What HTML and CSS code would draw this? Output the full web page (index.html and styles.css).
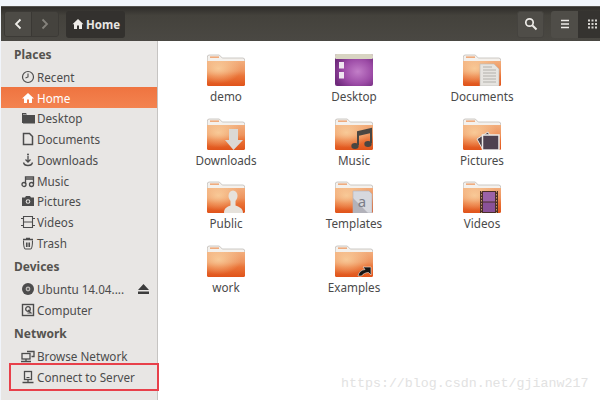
FILE: index.html
```html
<!DOCTYPE html>
<html lang="en">

<head>
    <meta charset="UTF-8">
    <title>Home</title>
    <link rel="stylesheet" href="styles.css">
</head>

<body>
    <!-- shared folder drawing -->
    <svg class="defs" width="0" height="0">
        <defs>
            <linearGradient id="folderFill" x1="0" y1="0" x2="0" y2="1">
                <stop offset="0" stop-color="#f2ad7c"/>
                <stop offset="0.4" stop-color="#ee945e"/>
                <stop offset="0.6" stop-color="#ea7438"/>
                <stop offset="1" stop-color="#e0531a"/>
            </linearGradient>
            <radialGradient id="folderGlow" cx="0.3" cy="0.3" r="0.6">
                <stop offset="0" stop-color="#fbd9a8" stop-opacity="0.75"/>
                <stop offset="1" stop-color="#fbd9a8" stop-opacity="0"/>
            </radialGradient>
            <radialGradient id="desktopFill" cx="0.6" cy="0.55" r="0.65">
                <stop offset="0" stop-color="#c27ec8"/>
                <stop offset="0.6" stop-color="#9c4ba6"/>
                <stop offset="1" stop-color="#6f2a7c"/>
            </radialGradient>
            <symbol id="folder" viewBox="0 0 38 32">
                <path d="M.3 3q0-2 2-2h10l3 3h20.400q2 0 2 2v6H.3z" fill="#f4f1ed" stroke="#b9b5b0" stroke-width=".7"/>
                <rect x="3" y="2.500" width="9" height="1.300" fill="#ee9a62"/>
                <path d="M0 7h38v23.500q0 1.500-1.500 1.500h-35Q0 32 0 30.500z" fill="url(#folderFill)"/>
                <path d="M0 7h38v23.500q0 1.500-1.500 1.500h-35Q0 32 0 30.500z" fill="url(#folderGlow)"/>
            </symbol>
        </defs>
    </svg>

    <div class="window">
        <header class="toolbar">
            <div class="nav-group">
                <button class="nav-btn">
                    <svg width="10" height="12" viewBox="0 0 10 12"><path d="M7.500 1.500 3 6l4.500 4.500" fill="none" stroke="#eeece8" stroke-width="1.800"/></svg>
                </button>
                <button class="nav-btn">
                    <svg width="10" height="12" viewBox="0 0 10 12"><path d="M2.500 1.500 7 6l-4.500 4.500" fill="none" stroke="#85827c" stroke-width="1.800"/></svg>
                </button>
            </div>
            <div class="path-btn">
                <svg width="12" height="12" viewBox="0 0 12 12"><path d="M6 1 .5 6.200H2V11h3V7.500h2V11h3V6.200h1.500z" fill="#eeece8"/></svg>
                <span>Home</span>
            </div>
            <div class="spacer"></div>
            <button class="tool-btn">
                <svg width="14" height="14" viewBox="0 0 14 14"><circle cx="5.500" cy="5.500" r="3.700" fill="none" stroke="#eeece8" stroke-width="1.700"/><path d="m8.500 8.500 4 4" stroke="#eeece8" stroke-width="2"/></svg>
            </button>
            <div class="view-group">
                <button class="view-btn">
                    <svg width="10" height="10" viewBox="0 0 10 10"><path d="M1 1.500h8M1 5h8M1 8.500h8" stroke="#eeece8" stroke-width="1.700"/></svg>
                </button>
                <button class="view-btn dark">
                    <svg width="10" height="10" viewBox="0 0 10 10"><path d="M0 1.500h10M0 5h10M0 8.500h10" stroke="#d8d6d2" stroke-width="1.800" stroke-dasharray="2 1.500"/></svg>
                </button>
            </div>
        </header>

        <div class="content">
            <nav class="sidebar">
                <h3 class="side-title">Places</h3>
                <div class="side-row">
                    <svg class="side-icon" viewBox="0 0 14 14"><circle cx="7" cy="7" r="5.500" fill="none" stroke="#4c4c4c" stroke-width="1.200"/><path d="M7 3.500V7l-2.500 1" fill="none" stroke="#4c4c4c" stroke-width="1.100"/></svg>
                    <span>Recent</span>
                </div>
                <div class="side-row active">
                    <svg class="side-icon" viewBox="0 0 14 14"><path d="M7 2 1 7.500h2V12h3V8.500h2V12h3V7.500h2z" fill="#fff"/></svg>
                    <span>Home</span>
                </div>
                <div class="side-row">
                    <svg class="side-icon" viewBox="0 0 14 14"><path d="M1 2h4l1 1.500h-4V12H1z" fill="#4c4c4c"/><rect x="2" y="4" width="12" height="8.500" fill="#4c4c4c"/></svg>
                    <span>Desktop</span>
                </div>
                <div class="side-row">
                    <svg class="side-icon" viewBox="0 0 14 14"><path d="M2.500 1.500h6l3 3v8h-9z" fill="none" stroke="#4c4c4c" stroke-width="1.500"/></svg>
                    <span>Documents</span>
                </div>
                <div class="side-row">
                    <svg class="side-icon" viewBox="0 0 14 14"><path d="M7 3v6M4.500 6.500 7 9l2.500-2.500M2.500 9.500C3 12 5 12.500 7 12.500s4-.5 4.500-3" fill="none" stroke="#4c4c4c" stroke-width="1.300"/><circle cx="7" cy="1.500" r="1" fill="#4c4c4c"/></svg>
                    <span>Downloads</span>
                </div>
                <div class="side-row">
                    <svg class="side-icon" viewBox="0 0 14 14"><path d="M4.500 10V3h8v7M4.500 5h8" fill="none" stroke="#4c4c4c" stroke-width="1.300"/><circle cx="3" cy="10.500" r="2" fill="none" stroke="#4c4c4c" stroke-width="1.300"/><circle cx="10.500" cy="10.500" r="2" fill="none" stroke="#4c4c4c" stroke-width="1.300"/></svg>
                    <span>Music</span>
                </div>
                <div class="side-row">
                    <svg class="side-icon" viewBox="0 0 14 14"><path d="M1 3.500h3L5 2h4l1 1.500h3V12H1z" fill="#4c4c4c"/><circle cx="7" cy="7.500" r="2.300" fill="#e8e6e4"/><circle cx="7" cy="7.500" r="1.200" fill="#4c4c4c"/></svg>
                    <span>Pictures</span>
                </div>
                <div class="side-row">
                    <svg class="side-icon" viewBox="0 0 14 14"><path d="M2.500 1v12M11.500 1v12M2.500 7h9M2.500 3.500H0M2.500 10.500H0M14 3.500h-2.500M14 10.500h-2.500M2.500 1.500h9M2.500 12.500h9" fill="none" stroke="#4c4c4c" stroke-width="1.100"/></svg>
                    <span>Videos</span>
                </div>
                <div class="side-row">
                    <svg class="side-icon" viewBox="0 0 14 14"><path d="M2 3.500h10M5 2.500h4" stroke="#4c4c4c" stroke-width="1.500"/><path d="M2.500 4.500c0 8 1 8.500 2 8.500h5c1 0 2-.5 2-8.500M5.500 6.500v4.500M7 6.500v4.500M8.500 6.500v4.500" fill="none" stroke="#4c4c4c" stroke-width="1.100"/></svg>
                    <span>Trash</span>
                </div>

                <h3 class="side-title">Devices</h3>
                <div class="side-row">
                    <svg class="side-icon" viewBox="0 0 14 14"><circle cx="7" cy="7" r="6" fill="#4c4c4c"/><circle cx="7" cy="7" r="2.400" fill="#b8b6b4"/><circle cx="7" cy="7" r="1" fill="#4c4c4c"/></svg>
                    <span class="grow">Ubuntu 14.04....</span>
                    <svg class="eject" width="11" height="10" viewBox="0 0 11 10"><path d="M5.500 0 11 6H0zM0 7.500h11V10H0z" fill="#3c3c3c"/></svg>
                </div>
                <div class="side-row">
                    <svg class="side-icon" viewBox="0 0 14 14"><rect x="1.500" y="1.500" width="11" height="11" fill="none" stroke="#4c4c4c" stroke-width="1.400"/><circle cx="7" cy="6" r="2.300" fill="none" stroke="#4c4c4c" stroke-width="1.300"/><path d="m7 7 3 3H6.500" fill="none" stroke="#4c4c4c" stroke-width="1.200"/></svg>
                    <span>Computer</span>
                </div>

                <h3 class="side-title">Network</h3>
                <div class="side-row">
                    <svg class="side-icon" viewBox="0 0 14 14"><rect x="1" y="4.500" width="8" height="5.500" fill="none" stroke="#4c4c4c" stroke-width="1.300"/><path d="M6 2.500h7v5h-2.500" fill="none" stroke="#4c4c4c" stroke-width="1.300"/><path d="M0 12.500h10M5 10v2.500" stroke="#4c4c4c" stroke-width="1.300"/></svg>
                    <span>Browse Network</span>
                </div>
                <div class="side-row">
                    <svg class="side-icon" viewBox="0 0 14 14"><rect x="3.500" y="1.500" width="7" height="8" fill="none" stroke="#4c4c4c" stroke-width="1.300"/><path d="M1.500 12.500h11M7 9.500v3" stroke="#4c4c4c" stroke-width="1.300"/><path d="M5.500 7.500h3" stroke="#4c4c4c"/></svg>
                    <span>Connect to Server</span>
                </div>
            </nav>

            <main class="files">
                <div class="file">
                    <svg class="file-icon" viewBox="0 0 38 32"><use href="#folder"/></svg>
                    <span>demo</span>
                </div>
                <div class="file">
                    <svg class="file-icon" viewBox="0 0 38 32">
                        <rect x="0" y="0" width="38" height="32" rx="2" fill="url(#desktopFill)"/>
                        <rect x="0" y="0" width="38" height="5" rx="1.500" fill="#d8d4c2"/>
                        <rect x="4" y="8" width="5" height="6.500" fill="#efe6f0"/>
                        <rect x="4" y="18" width="5" height="6.500" fill="#efe6f0"/>
                    </svg>
                    <span>Desktop</span>
                </div>
                <div class="file">
                    <svg class="file-icon" viewBox="0 0 38 32">
                        <use href="#folder"/>
                        <path d="M17 10h14l5 5v17H17z" fill="#e6e4e0" stroke="#bdbab6" stroke-width=".6"/>
                        <path d="M20 13h9M20 16h13M20 19h13M20 22h13M20 25h13M20 28h13" stroke="#a5a29e" stroke-width=".8"/>
                    </svg>
                    <span>Documents</span>
                </div>
                <div class="file">
                    <svg class="file-icon" viewBox="0 0 38 32">
                        <use href="#folder"/>
                        <path d="M22 11h9v11h5L26.500 32 18 22h4z" fill="#dbd8d4"/>
                    </svg>
                    <span>Downloads</span>
                </div>
                <div class="file">
                    <svg class="file-icon" viewBox="0 0 38 32">
                        <use href="#folder"/>
                        <path d="M23 27V14l13-3v14" fill="none" stroke="#4a4642" stroke-width="2"/>
                        <path d="M23 14l13-3v4l-13 3z" fill="#4a4642"/>
                        <ellipse cx="20" cy="28" rx="3.700" ry="3" fill="#4a4642"/>
                        <ellipse cx="33" cy="26" rx="3.700" ry="3" fill="#4a4642"/>
                    </svg>
                    <span>Music</span>
                </div>
                <div class="file">
                    <svg class="file-icon" viewBox="0 0 38 32">
                        <use href="#folder"/>
                        <path d="m14 21 11-7 6 11-11 7z" fill="#4a4048" stroke="#e6e2de"/>
                        <rect x="19.500" y="17" width="16.500" height="15" fill="#4e4250" stroke="#ecebe8" stroke-width="1.500"/>
                    </svg>
                    <span>Pictures</span>
                </div>
                <div class="file">
                    <svg class="file-icon" viewBox="0 0 38 32">
                        <use href="#folder"/>
                        <ellipse cx="26" cy="15" rx="4.500" ry="5.500" fill="#e6e2dc"/>
                        <path d="M17 32c0-5 3-6 6.500-7.500V19h5v5.500C32 26 36 27 36 32z" fill="#e6e2dc"/>
                    </svg>
                    <span>Public</span>
                </div>
                <div class="file">
                    <svg class="file-icon" viewBox="0 0 38 32">
                        <use href="#folder"/>
                        <path d="M18 10h16l3 3v19H18z" fill="#d6d8de" stroke="#b4b4b8" stroke-width=".6"/>
                        <path d="M18 17v15h15z" fill="#b2b2ba"/>
                        <text class="tpl-letter" x="27" y="26">a</text>
                    </svg>
                    <span>Templates</span>
                </div>
                <div class="file">
                    <svg class="file-icon" viewBox="0 0 38 32">
                        <use href="#folder"/>
                        <rect x="17" y="10" width="18" height="22" fill="#4a2f28"/>
                        <rect x="20" y="11" width="12" height="9.500" fill="#9a62a8"/>
                        <rect x="20" y="21.500" width="12" height="9.500" fill="#8a5298"/>
                        <path d="M18.500 10v22M33.500 10v22" stroke="#c49a6a" stroke-width="1" stroke-dasharray="1.500 1.500"/>
                    </svg>
                    <span>Videos</span>
                </div>
                <div class="file">
                    <svg class="file-icon" viewBox="0 0 38 32"><use href="#folder"/></svg>
                    <span>work</span>
                </div>
                <div class="file">
                    <svg class="file-icon" viewBox="0 0 38 32">
                        <use href="#folder"/>
                        <path d="M23 31c1-4 3-6 7-6.500L28 22h8v8l-2.500-2.500c-3 0-5.500 1.500-7 3.500z" fill="#141414" stroke="#f3efe8" stroke-width=".6"/>
                    </svg>
                    <span>Examples</span>
                </div>
            </main>
        </div>
    </div>

    <div class="highlight"></div>
    <div class="watermark">https://blog.csdn.net/gjianw217</div>
</body>

</html>
```

FILE: styles.css
```css
* {
    box-sizing: border-box;
}

html, body {
    margin: 0;
    height: 400px;
    overflow: hidden;
}

body {
    background-color: #f1f5fb;
    padding-top: 6px;
    font-family: "Noto Sans", sans-serif;
    font-size: 11.7px;
    position: relative;
}

.defs {
    position: absolute;
}

.window {
    height: 394px;
    margin-left: 1px;
    display: flex;
    flex-direction: column;
    background-color: #fff;
}

.toolbar {
    height: 35px;
    flex: none;
    display: flex;
    align-items: center;
    padding: 0 0 0 3px;
    background: linear-gradient(#2f2d2a, #44423c 25%, #4a4843);
    border-top: 1px solid #55534f;
}

button {
    border: none;
    padding: 0;
    background: none;
    display: flex;
    align-items: center;
    justify-content: center;
}

.nav-group {
    display: flex;
    width: 55px;
    height: 26px;
    border-radius: 3px;
    overflow: hidden;
    border: 1px solid #3c3a36;
}

.nav-btn {
    flex: 1;
    background-color: #4d4b46;
}

.nav-btn + .nav-btn {
    background-color: #45433e;
    border-left: 1px solid #3a3834;
}

.path-btn {
    margin-left: 7px;
    width: 59px;
    height: 27px;
    display: flex;
    align-items: center;
    gap: 2px;
    padding-left: 6px;
    border-radius: 3px;
    background-color: #33312e;
    color: #e8e6e2;
    font-weight: 700;
    font-size: 11.5px;
}

.spacer {
    flex: 1;
}

.tool-btn {
    width: 27px;
    height: 27px;
    border-radius: 3px;
    background-color: #4f4d48;
    border: 1px solid #45433f;
}

.view-group {
    display: flex;
    margin-left: 7px;
    height: 27px;
}

.view-btn {
    width: 27px;
    border-radius: 3px 0 0 3px;
    background-color: #4f4d48;
}

.view-btn.dark {
    width: 22px;
    justify-content: flex-start;
    padding-left: 10px;
    border-radius: 0;
    background-color: #353330;
}

.content {
    flex: 1;
    display: flex;
    min-height: 0;
}

.sidebar {
    width: 157px;
    flex: none;
    background-color: #e8e6e4;
    border-right: 1px solid #c6c4c2;
    color: #4c4c4c;
}

.side-title {
    margin: 0;
    height: 25.4px;
    padding: 5.5px 0 0 13px;
    font-size: 12px;
    line-height: 16px;
    font-weight: 700;
    color: #55534f;
}

.side-row {
    height: 20.75px;
    display: flex;
    align-items: center;
    padding-left: 20px;
    gap: 2px;
    white-space: nowrap;
}

.side-row.active {
    background: linear-gradient(#ef7440, #f38350);
    color: #fff;
}

.side-icon {
    width: 14px;
    height: 14px;
    flex: none;
}

.grow {
    flex: 1;
}

.eject {
    margin-right: 8px;
}

.files {
    flex: 1;
    display: grid;
    grid-template-columns: repeat(3, 128px);
    grid-auto-rows: 63.5px;
    padding: 13px 0 0 4px;
    color: #4a4a4a;
}

.file {
    display: flex;
    flex-direction: column;
    align-items: center;
    gap: 2px;
    line-height: 17px;
}

.file-icon {
    width: 38px;
    height: 32px;
    flex: none;
}

.tpl-letter {
    font-size: 15px;
    fill: #7c7e88;
    text-anchor: middle;
    font-family: "Noto Sans", sans-serif;
}

.highlight {
    position: absolute;
    left: 9px;
    top: 363px;
    width: 150px;
    height: 28px;
    border: 2px solid #e8404a;
}

.watermark {
    position: absolute;
    left: 341px;
    top: 375px;
    font-family: "Liberation Mono", monospace;
    font-size: 13.3px;
    line-height: 18px;
    color: #e2e2e2;
    white-space: nowrap;
}
```
